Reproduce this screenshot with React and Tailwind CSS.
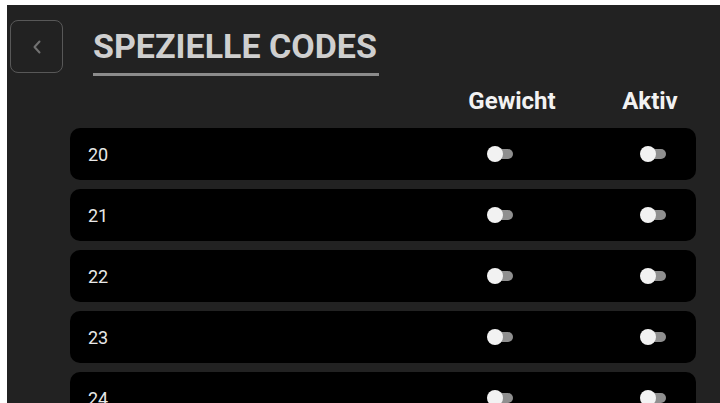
// SpecialCodes.jsx
const codes = [20, 21, 22, 23, 24];

function Toggle() {
  return (
    <div className="relative h-[16px] w-[26px]">
      <div className="absolute right-0 top-[3px] h-[10px] w-[20px] rounded-full bg-[#8f8f8f]" />
      <div className="absolute left-0 top-0 h-[16px] w-[16px] rounded-full bg-[#f2f2f2]" />
    </div>
  );
}

export default function App() {
  return (
    <div
      className="h-[403px] w-[720px] overflow-hidden bg-white pl-[7px] pt-[5px]"
      style={{ fontFamily: "Roboto, 'Liberation Sans', sans-serif" }}
    >
      <div className="h-full bg-[#222222]">
        <header className="flex items-start pl-[3px] pt-[15px]">
          <button className="grid h-[53px] w-[53px] place-items-center rounded-[8px] border-[1.5px] border-[#585858]">
            <svg width="10" height="16" viewBox="0 0 10 16" fill="none">
              <path
                d="M7.5 2.5L2.5 8L7.5 13.5"
                stroke="#727272"
                strokeWidth="2"
                strokeLinecap="round"
                strokeLinejoin="round"
              />
            </svg>
          </button>
          <div className="ml-[30px] pt-[8px]">
            <h1 className="whitespace-nowrap text-[34px] font-bold leading-[36px] text-[#cfcfcf]">
              SPEZIELLE CODES
            </h1>
            <div className="mt-[9px] h-[3px] w-[286px] bg-[#8c8c8c]" />
          </div>
        </header>

        <main className="ml-[63px] mr-[24px]">
          <div className="flex justify-end pr-[6px] pt-[10px] text-[24px] font-bold leading-[30px] text-[#f2f2f2]">
            <div className="w-[100px] text-center">Gewicht</div>
            <div className="ml-[48px] w-[80px] text-center">Aktiv</div>
          </div>

          <div className="mt-[12px] flex flex-col gap-[9px]">
            {codes.map((code) => (
              <div
                key={code}
                className="flex h-[52px] shrink-0 items-center rounded-[10px] bg-black pl-[18px] pr-[30px]"
              >
                <span className="flex-1 text-[18px] text-[#e8e8e8]">{code}</span>
                <Toggle />
                <div className="ml-[127px]">
                  <Toggle />
                </div>
              </div>
            ))}
          </div>
        </main>
      </div>
    </div>
  );
}
